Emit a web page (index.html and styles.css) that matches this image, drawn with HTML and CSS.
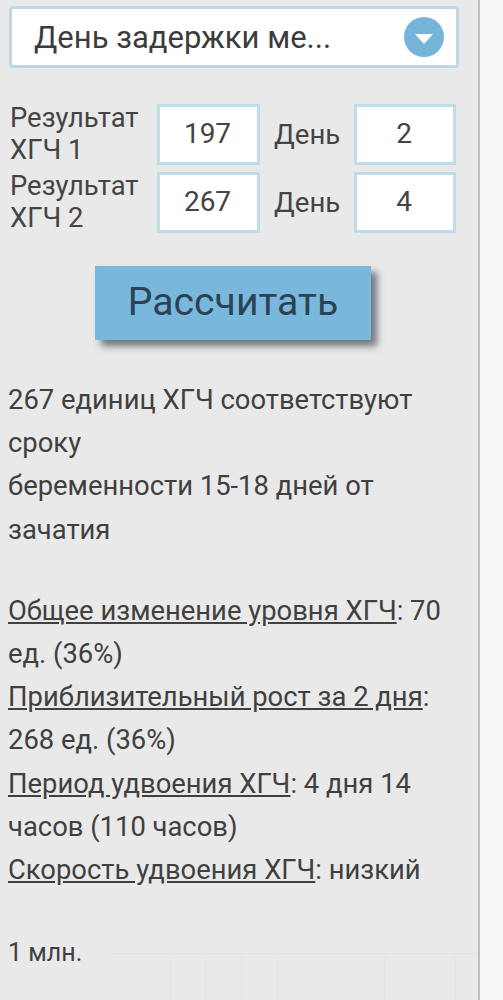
FILE: index.html
```html
<!DOCTYPE html>
<html lang="ru">
<head>
<meta charset="utf-8">
<title>Калькулятор ХГЧ</title>
<link rel="stylesheet" href="styles.css">
</head>
<body>
<div class="page">
  <main class="panel">
    <div class="select">
      <span class="select-text">День задержки ме...</span>
      <svg class="select-icon" viewBox="0 0 40 40" width="40" height="40" aria-hidden="true">
        <circle cx="20" cy="20" r="20" fill="#75b5da"/>
        <path d="M11 17h18l-9 10z" fill="#fff"/>
      </svg>
    </div>
    <div class="rows">
      <div class="row">
        <div class="row-label">Результат<br>ХГЧ 1</div>
        <div class="field">197</div>
        <div class="day">День</div>
        <div class="field field-day">2</div>
      </div>
      <div class="row">
        <div class="row-label">Результат<br>ХГЧ 2</div>
        <div class="field">267</div>
        <div class="day">День</div>
        <div class="field field-day">4</div>
      </div>
    </div>
    <div class="action"><button class="calc" type="button">Рассчитать</button></div>
    <p class="result">267 единиц ХГЧ соответствуют<br>сроку<br>беременности 15-18 дней от<br>зачатия</p>
    <p class="result stats"><u>Общее изменение уровня ХГЧ</u>: 70<br>ед. (36%)<br>
      <u>Приблизительный рост за 2 дня</u>:<br>268 ед. (36%)<br>
      <u>Период удвоения ХГЧ</u>: 4 дня 14<br>часов (110 часов)<br>
      <u>Скорость удвоения ХГЧ</u>: низкий</p>
    <div class="chart">
      <div class="chart-label">1 млн.</div>
      <div class="chart-grid"></div>
    </div>
  </main>
  <aside class="gutter"></aside>
</div>
</body>
</html>
```
FILE: styles.css
```css
* { box-sizing: border-box; }
html, body { margin: 0; height: 1000px; overflow: hidden; }
body { font-family: Roboto, "Liberation Sans", sans-serif; color: #333; background: #f8f8f8; }
.page { display: flex; height: 1000px; }
.panel {
  width: 480px;
  flex: none;
  background: #e9e9e9;
  border-right: 2px solid #bdbdbd;
  padding: 6px 20px 0 8px;
}
.select {
  width: 450px;
  height: 62px;
  margin-left: 1px;
  background: #fff;
  border: 3px solid #bcd8e6;
  border-radius: 4px;
  display: flex;
  align-items: center;
  justify-content: space-between;
  padding: 0 12px 0 22px;
}
.select-text { font-size: 31px; color: #3c3c3c; }
.select-icon { display: block; flex: none; }
.rows { margin-top: 36px; display: flex; flex-direction: column; gap: 7px; }
.row { display: flex; align-items: center; height: 61px; padding-left: 2px; }
.row-label { width: 147px; padding-bottom: 2px; font-size: 27.4px; line-height: 32px; color: #444; }
.field {
  width: 103px;
  height: 61px;
  background: #fff;
  border: 3px solid #c0dcea;
  display: flex;
  align-items: center;
  justify-content: center;
  padding: 0 2px 2px 0;
  font-size: 28px;
  color: #444;
}
.day { width: 94px; padding-left: 14px; font-size: 27.6px; color: #444; }
.field-day { width: 102px; }
.action { margin-top: 33px; padding-left: 87px; }
.calc {
  display: block;
  width: 276px;
  height: 74px;
  border: 0;
  padding: 0 0 2px;
  background: #79b8dc;
  box-shadow: 6px 6px 7px rgba(60, 70, 80, 0.7);
  font-family: inherit;
  font-size: 39.2px;
  color: #2c4356;
}
.result { margin: 39px 0 0; font-size: 27.4px; line-height: 43.2px; color: #404040; }
.stats { margin-top: 38px; }
.chart { display: flex; margin-top: 39px; height: 80px; margin-right: -20px; }
.chart-label { width: 102px; font-size: 25px; line-height: 43px; color: #404040; }
.chart-grid {
  flex: 1;
  margin-top: 22px;
  border-top: 1px solid #e4e4e4;
  background-image: repeating-linear-gradient(to right, transparent 0, transparent 34.7px, #e5e5e5 34.7px, #e5e5e5 35.7px);
  background-position: 25px 0;
}
```
